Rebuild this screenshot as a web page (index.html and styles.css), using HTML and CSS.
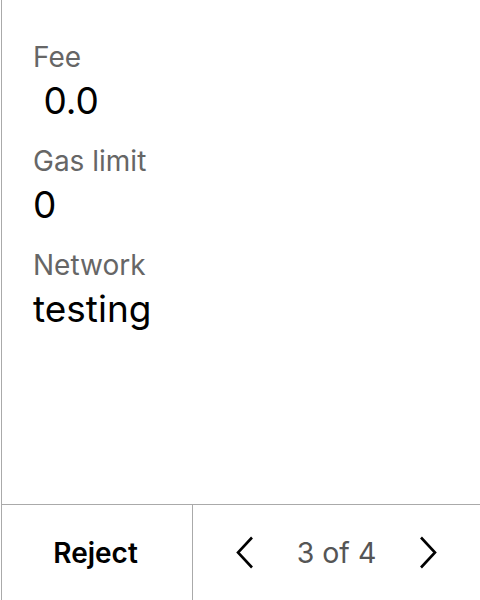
FILE: index.html
```html
<!DOCTYPE html>
<html>
<head>
<meta charset="utf-8">
<link rel="stylesheet" href="styles.css">
</head>
<body>
<div class="screen">
  <div class="details">
    <div class="field">
      <div class="label">Fee</div>
      <div class="value">&nbsp;0.0</div>
    </div>
    <div class="field">
      <div class="label">Gas limit</div>
      <div class="value">0</div>
    </div>
    <div class="field">
      <div class="label">Network</div>
      <div class="value">testing</div>
    </div>
  </div>
  <div class="footer">
    <div class="reject">Reject</div>
    <div class="pager">
      <svg class="chev prev" width="18" height="33" viewBox="0 0 18 33"><path d="M16 1.5 L2 16.5 L16 31.5" fill="none" stroke="#000" stroke-width="2.6"/></svg>
      <span class="count">3 of 4</span>
      <svg class="chev next" width="18" height="33" viewBox="0 0 18 33"><path d="M2 1.5 L16 16.5 L2 31.5" fill="none" stroke="#000" stroke-width="2.6"/></svg>
    </div>
  </div>
</div>
</body>
</html>
```

FILE: styles.css
```css
html, body {
  margin: 0;
  padding: 0;
  background: #fff;
}
body {
  font-family: Inter, "Noto Sans", sans-serif;
}
.screen {
  width: 479px;
  height: 600px;
  margin-left: 1px;
  border-left: 1px solid #aaa;
  box-sizing: border-box;
  display: flex;
  flex-direction: column;
}
.details {
  flex: 1;
  padding: 40px 0 0 31px;
  display: flex;
  flex-direction: column;
  gap: 21px;
}
.field {
  display: flex;
  flex-direction: column;
  gap: 4px;
}
.label {
  font-size: 28px;
  color: #666;
  line-height: 34px;
}
.value {
  font-size: 37px;
  color: #000;
  line-height: 45px;
}
.footer {
  height: 96px;
  border-top: 1px solid #aaa;
  box-sizing: border-box;
  display: flex;
}
.reject {
  width: 191px;
  border-right: 1px solid #aaa;
  display: flex;
  align-items: center;
  justify-content: center;
  padding-right: 3px;
  box-sizing: border-box;
  font-size: 28px;
  font-weight: 600;
  color: #000;
}
.pager {
  flex: 1;
  display: flex;
  align-items: center;
  justify-content: center;
}
.prev {
  margin-right: 43px;
}
.next {
  margin-left: 43px;
}
.count {
  font-size: 28.5px;
  color: #555;
}
```
